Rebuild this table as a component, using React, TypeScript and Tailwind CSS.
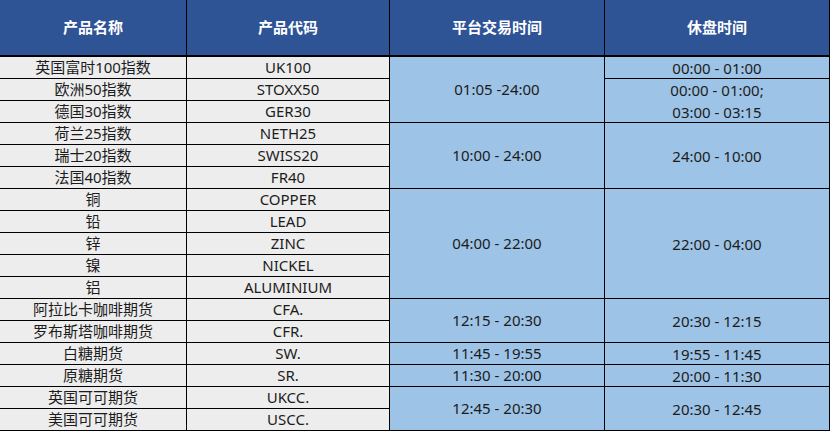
const names: [string, string][] = [
  ['英国富时100指数', 'UK100'],
  ['欧洲50指数', 'STOXX50'],
  ['德国30指数', 'GER30'],
  ['荷兰25指数', 'NETH25'],
  ['瑞士20指数', 'SWISS20'],
  ['法国40指数', 'FR40'],
  ['铜', 'COPPER'],
  ['铅', 'LEAD'],
  ['锌', 'ZINC'],
  ['镍', 'NICKEL'],
  ['铝', 'ALUMINIUM'],
  ['阿拉比卡咖啡期货', 'CFA.'],
  ['罗布斯塔咖啡期货', 'CFR.'],
  ['白糖期货', 'SW.'],
  ['原糖期货', 'SR.'],
  ['英国可可期货', 'UKCC.'],
  ['美国可可期货', 'USCC.'],
]

// row start (grid line, header is line 1), span, text
const trading: { row: string; text: string }[] = [
  { row: 'row-start-2 row-span-3', text: '01:05 -24:00' },
  { row: 'row-start-5 row-span-3', text: '10:00 - 24:00' },
  { row: 'row-start-8 row-span-5', text: '04:00 - 22:00' },
  { row: 'row-start-13 row-span-2', text: '12:15 - 20:30' },
  { row: 'row-start-15 row-span-1', text: '11:45 - 19:55' },
  { row: 'row-start-16 row-span-1', text: '11:30 - 20:00' },
  { row: 'row-start-17 row-span-2', text: '12:45 - 20:30' },
]

const breaks: { row: string; lines: string[] }[] = [
  { row: 'row-start-2 row-span-1', lines: ['00:00 - 01:00'] },
  { row: 'row-start-3 row-span-2', lines: ['00:00 - 01:00;', '03:00 - 03:15'] },
  { row: 'row-start-5 row-span-3', lines: ['24:00 - 10:00'] },
  { row: 'row-start-8 row-span-5', lines: ['22:00 - 04:00'] },
  { row: 'row-start-13 row-span-2', lines: ['20:30 - 12:15'] },
  { row: 'row-start-15 row-span-1', lines: ['19:55 - 11:45'] },
  { row: 'row-start-16 row-span-1', lines: ['20:00 - 11:30'] },
  { row: 'row-start-17 row-span-2', lines: ['20:30 - 12:45'] },
]

const rowStarts = [
  'row-start-2', 'row-start-3', 'row-start-4', 'row-start-5', 'row-start-6', 'row-start-7',
  'row-start-8', 'row-start-9', 'row-start-10', 'row-start-11', 'row-start-12', 'row-start-13',
  'row-start-14', 'row-start-15', 'row-start-16', 'row-start-17', 'row-start-18',
]

const cell = 'flex flex-col items-center justify-center border-r border-b border-black'
const header = 'flex items-center justify-center border-r border-b-2 border-black bg-[#2f5496] text-white font-bold'

export default function App() {
  return (
    <div
      className="w-[830px] h-[431px] bg-white text-[15px] text-[#1c1c1c]"
      style={{ fontFamily: '"Noto Sans", "Noto Sans CJK SC", sans-serif' }}
    >
      <div className="grid grid-cols-[187px_203px_215px_225px] grid-rows-[57px_repeat(17,22px)]">
        <div className={`${header} col-start-1 row-start-1`}>产品名称</div>
        <div className={`${header} col-start-2 row-start-1`}>产品代码</div>
        <div className={`${header} col-start-3 row-start-1`}>平台交易时间</div>
        <div className={`${header} col-start-4 row-start-1`}>休盘时间</div>

        {names.map(([name, code], i) => (
          <div key={name + code} className="contents">
            <div className={`${cell} col-start-1 ${rowStarts[i]} bg-[#ededed] leading-none`}>{name}</div>
            <div className={`${cell} col-start-2 ${rowStarts[i]} bg-[#ededed] leading-none`}>{code}</div>
          </div>
        ))}

        {trading.map((t) => (
          <div key={t.row} className={`${cell} col-start-3 ${t.row} bg-[#9dc3e6] leading-none`}>
            {t.text}
          </div>
        ))}

        {breaks.map((b) => (
          <div key={b.row} className={`${cell} col-start-4 ${b.row} bg-[#9dc3e6] leading-[22px]`}>
            {b.lines.map((l) => (
              <span key={l}>{l}</span>
            ))}
          </div>
        ))}
      </div>
    </div>
  )
}
